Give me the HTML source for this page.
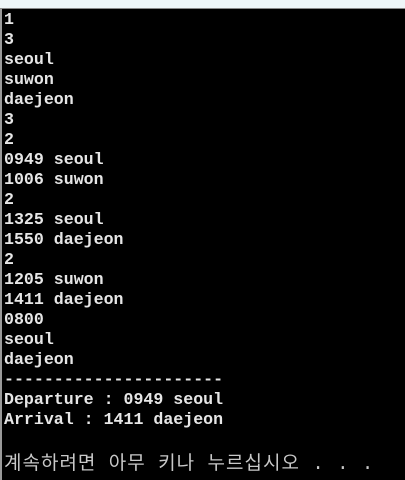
<!DOCTYPE html>
<html><head><meta charset="utf-8"><style>
html,body{margin:0;padding:0;width:405px;height:480px;overflow:hidden;background:#000;}
.top{position:absolute;left:0;top:0;width:405px;height:8px;background:#eef6f8;border-bottom:1px solid #888;}
.left{position:absolute;left:0;top:9px;width:2px;height:471px;background:#9a9a9a;}
pre{position:absolute;left:4px;top:10px;margin:0;font-family:"Liberation Mono",monospace;font-size:16.6px;line-height:20px;color:#e6e6e6;font-weight:bold;letter-spacing:0;}
.k{position:absolute;left:4px;top:448px;font-family:"Liberation Mono","Noto Sans CJK KR",monospace;font-size:19px;color:#c8c8c8;white-space:pre;letter-spacing:1px;}
</style></head><body>
<div class="top"></div><div class="left"></div>
<pre>1
3
seoul
suwon
daejeon
3
2
0949 seoul
1006 suwon
2
1325 seoul
1550 daejeon
2
1205 suwon
1411 daejeon
0800
seoul
daejeon
----------------------
Departure : 0949 seoul
Arrival : 1411 daejeon</pre>
<div class="k">계속하려면 아무 키나 누르십시오 . . .</div>
</body></html>
